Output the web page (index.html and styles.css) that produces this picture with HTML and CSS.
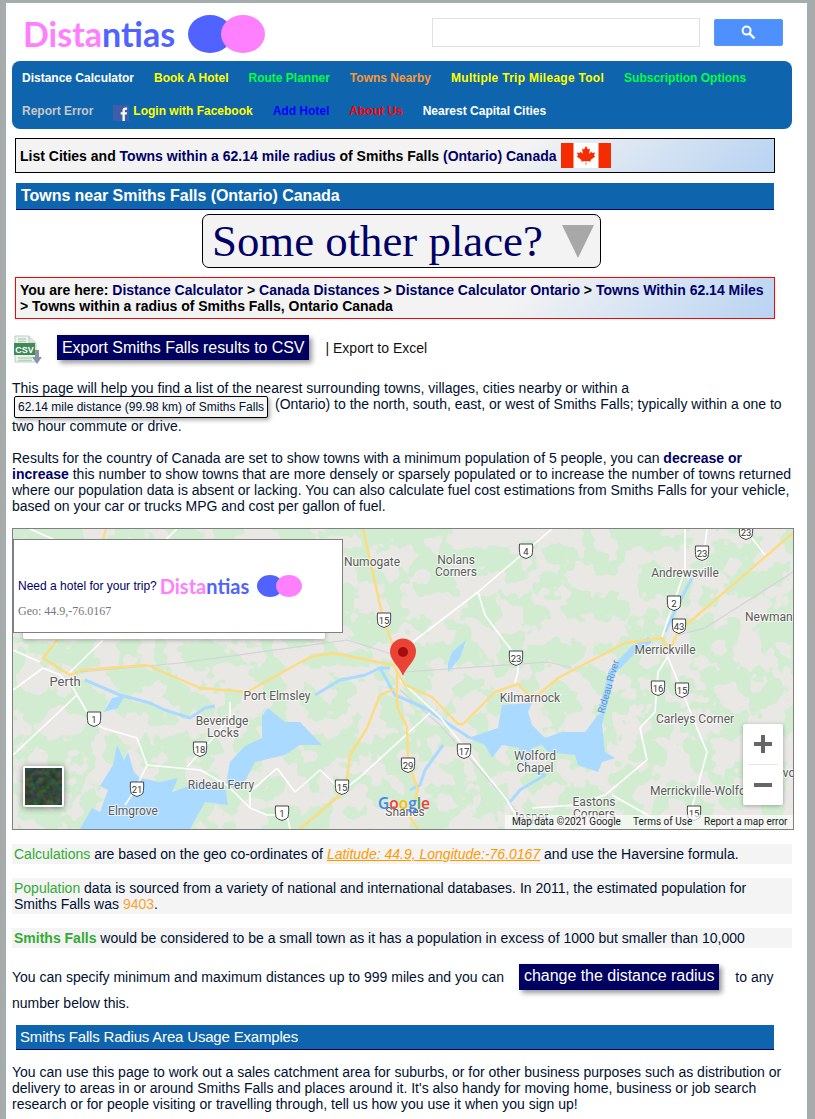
FILE: index.html
```html
<!DOCTYPE html>
<html lang="en">
<head>
<meta charset="utf-8">
<title>Towns near Smiths Falls (Ontario) Canada</title>
<link rel="stylesheet" href="styles.css">
</head>
<body>
<div class="page">
  <header class="top">
    <div class="logo logo-lg">
      <span class="logo-text"><span class="pink">Dista</span><span class="blue">ntias</span></span>
      <span class="dots"><i class="dot dot-blue"></i><i class="dot dot-pink"></i></span>
    </div>
    <form class="search">
      <input class="search-input" type="text" aria-label="Search">
      <button class="search-btn" type="button" aria-label="Search">
        <svg width="15" height="15" viewBox="0 0 15 15"><circle cx="5.6" cy="5.6" r="4" fill="none" stroke="#fff" stroke-width="2"/><path d="M8.6 8.6 13.4 13.4" stroke="#fff" stroke-width="2.4"/></svg>
      </button>
    </form>
  </header>

  <nav class="nav">
    <a class="c-white">Distance Calculator</a>
    <a class="c-yellow">Book A Hotel</a>
    <a class="c-green">Route Planner</a>
    <a class="c-orange">Towns Nearby</a>
    <a class="c-yellow wide">Multiple Trip Mileage Tool</a>
    <a class="c-green">Subscription Options</a>
    <a class="c-grey">Report Error</a>
    <a class="c-yellow fb-link">
      <svg class="fb" width="16" height="16" viewBox="0 0 16 16"><rect width="16" height="16" fill="#3f5ca8"/><path d="M9.5 16V9.6H7.7V7.2h1.8V5.600c0-2 1.200-3 3-3 .8 0 1.400.1 1.600.1v2.100h-1.100c-1 0-1.200.5-1.200 1.100v1.300h2.200l-.3 2.400h-1.900V16z" fill="#fff"/></svg>Login with Facebook</a>
    <a class="c-blue">Add Hotel</a>
    <a class="c-red">About Us</a>
    <a class="c-white">Nearest Capital Cities</a>
  </nav>

  <h1 class="panel panel-black title">
    <span>List Cities and <span class="navy">Towns within a 62.14 mile radius</span> of Smiths Falls <span class="navy">(Ontario) Canada</span></span>
    <svg class="flag" width="50" height="25" viewBox="0 0 50 25"><rect width="50" height="25" fill="#fff"/><rect width="12.5" height="25" fill="#f52c00"/><rect x="37.5" width="12.5" height="25" fill="#f52c00"/><path d="M25 3 23 6.5 21 5.5 22 11 19.5 8.5 19 10 16 9.5 17 12.5 15.8 13.5 20.5 17 20 18.5 24.7 18V22H25.3V18L30 18.5 29.5 17 34.2 13.5 33 12.5 34 9.5 31 10 30.5 8.5 28 11 29 5.5 27 6.5Z" fill="#f52c00"/></svg>
  </h1>

  <h2 class="bar bar-bold">Towns near Smiths Falls (Ontario) Canada</h2>

  <div class="place">
    <span>Some other place?</span>
    <svg width="32" height="33" viewBox="0 0 32 33"><path d="M0 0H32L16 33Z" fill="#a8a8a8"/></svg>
  </div>

  <div class="panel panel-red crumbs">
    You are here: <a class="navy">Distance Calculator</a> &gt; <a class="navy">Canada Distances</a> &gt; <a class="navy">Distance Calculator Ontario</a> &gt; <a class="navy">Towns Within 62.14 Miles</a> &gt; Towns within a radius of Smiths Falls, Ontario Canada
  </div>

  <div class="export">
    <svg class="csv" width="28" height="30" viewBox="0 0 28 30">
      <path d="M1 1H15L22 8V27H1Z" fill="#eef2ee" stroke="#c4cac6"/>
      <path d="M15 1V8H22" fill="#dfe5e0" stroke="#c4cac6"/>
      <path d="M4 4H12M4 6.500H12M4 23H18M4 25.500H18" stroke="#b5d6b5" stroke-width="1.500"/>
      <rect x="0" y="8" width="21" height="12" fill="#3f8a58"/>
      <text class="csv-text" x="10.500" y="17.500" text-anchor="middle">CSV</text>
      <path d="M21 15H25V22H28L23 29 18 22H21Z" fill="#8596a6"/>
    </svg>
    <a class="btn btn-export">Export Smiths Falls results to CSV</a>
    <span class="excel">| Export to Excel</span>
  </div>

  <p class="copy intro">This page will help you find a list of the nearest surrounding towns, villages, cities nearby or within a <span class="chip">62.14 mile distance (99.98 km) of Smiths Falls</span> (Ontario) to the north, south, east, or west of Smiths Falls; typically within a one to two hour commute or drive.</p>

  <p class="copy results">Results for the country of Canada are set to show towns with a minimum population of 5 people, you can <b>decrease or increase</b> this number to show towns that are more densely or sparsely populated or to increase the number of towns returned where our population data is absent or lacking. You can also calculate fuel cost estimations from Smiths Falls for your vehicle, based on your car or trucks MPG and cost per gallon of fuel.</p>

  <div class="map">
    <svg class="map-art" width="780" height="300" viewBox="13 529 780 300">
      <defs>
        <filter id="patches" x="0" y="0" width="100%" height="100%" color-interpolation-filters="sRGB">
          <feTurbulence type="fractalNoise" baseFrequency="0.042" numOctaves="3" seed="23"/>
          <feColorMatrix type="matrix" values="0 0 0 0 0.82  0 0 0 0 0.925  0 0 0 0 0.82  30 0 0 0 -14.400"/>
        </filter>
        <filter id="sat" x="0" y="0" width="100%" height="100%" color-interpolation-filters="sRGB">
          <feTurbulence type="fractalNoise" baseFrequency="0.16" numOctaves="2" seed="4"/>
          <feColorMatrix type="matrix" values="0.3 0 0 0 0.06  0 0.3 0 0 0.14  0 0 0.3 0 0.07  0 0 0 0 1"/>
        </filter>
        <path id="shield" d="M-6.500 -7H6.500C7 -3 6.500 1 6 4 5 6 2 6.500 0 7.500-2 6.500-5 6-6 4-6.500 1-7 -3-6.500 -7Z"/>
      </defs>
      <rect x="13" y="529" width="780" height="300" fill="#eae8e4"/>
      <rect x="13" y="529" width="780" height="300" filter="url(#patches)"/>

      <g class="rail">
        <path d="M80 672 180 663 347 640 405 658"/>
        <path d="M405 672 548 662 572 668"/>
        <path d="M678 635 705 628 793 572"/>
        <path d="M400 690 440 725 520 815"/>
      </g>

      <g class="water">
        <path d="M80 829 92 808 100 812 108 790 100 786 113 765 117 745 124 760 128 752 134 772 140 778 160 782 178 778 172 792 200 782 225 790 230 762 245 746 262 738 262 716 268 708 285 722 300 722 322 745 300 745 285 755 255 762 240 790 225 785 228 805 205 802 190 829Z"/>
        <path d="M468 738 498 728 502 705 532 703 528 712 532 725 545 738 562 732 585 732 598 715 605 712 602 725 605 752 615 758 602 762 598 772 578 765 575 755 548 752 542 745 532 748 535 755 520 748 502 745 492 758 485 745Z"/>
        <path d="M448 672 460 658 466 640 452 652 448 664Z"/>
        <path d="M112 698 125 695 118 708 104 712Z"/>
      </g>
      <g class="river">
        <path d="M602 712 612 672 635 648 650 640"/>
        <path class="thin" d="M85 680 120 695 150 703 165 710 190 718 205 708 215 706"/>
        <path class="thin" d="M315 695 340 680 365 675 380 668 390 668"/>
        <path class="thin" d="M380 668 395 695 425 708 450 725 470 738"/>
        <path class="thin" d="M443 745 425 770 420 785 410 790"/>
        <path class="thin" d="M665 632 678 605 692 578"/>
        <path class="thin" d="M520 748 530 770 545 775 520 790 510 802"/>
      </g>

      <g class="road-white">
        <path d="M405 648 478 592 552 529"/>
        <path d="M478 592 485 615 505 642 518 658 518 672 515 683"/>
        <path d="M400 680 440 717 507 800 517 817"/>
        <path d="M430 713 360 777 343 790"/>
        <path d="M13 755 77 695"/>
        <path d="M67 675 103 640"/>
        <path d="M13 650 40 662"/>
        <path d="M13 690 43 668 60 675 73 688 93 722 103 728 137 738 147 765 200 770 227 785 250 808 267 815 287 815 290 829"/>
        <path d="M147 765 135 790 125 805"/>
        <path d="M277 768 295 792 320 770 333 782 343 795"/>
        <path d="M277 768 250 792 250 808"/>
        <path d="M230 702 230 718 213 738 187 767"/>
        <path d="M667 655 707 752 692 808"/>
        <path d="M667 658 658 672 655 712 640 728 647 760 605 795 575 805 532 808"/>
        <path d="M612 795 660 822"/>
        <path d="M662 637 685 570 685 529"/>
        <path d="M752 538 765 555"/>
        <path d="M707 529 705 545"/>
        <path d="M177 529 160 545"/>
        <path d="M30 529 55 540"/>
      </g>

      <g class="road-yellow">
        <path d="M70 675 83 670 147 665 200 688 247 692 310 657 333 653 393 665 405 685 432 697 458 724 463 724 495 692 518 684 528 695 538 695 558 678 625 643 662 638 665 645 672 645 678 632 793 533"/>
        <path d="M363 529 383 618 400 665"/>
        <path d="M106 529 103 540"/>
        <path d="M57 640 43 658 70 675"/>
        <path d="M397 670 397 707 407 727 408 760 418 790 413 807 410 817 418 829"/>
        <path d="M397 688 380 695 367 728 350 755 347 778 340 795 300 829"/>
      </g>

      <g class="shields">
        <g transform="translate(384 620)"><use href="#shield"/><text y="3.5">15</text></g>
        <g transform="translate(94 719)"><use href="#shield"/><text y="3.5">1</text></g>
        <g transform="translate(200 749)"><use href="#shield"/><text y="3.5">18</text></g>
        <g transform="translate(137 789)"><use href="#shield"/><text y="3.5">21</text></g>
        <g transform="translate(342 787)"><use href="#shield"/><text y="3.5">15</text></g>
        <g transform="translate(282 813)"><use href="#shield"/><text y="3.5">1</text></g>
        <g transform="translate(408 765)"><use href="#shield"/><text y="3.5">29</text></g>
        <g transform="translate(464 751)"><use href="#shield"/><text y="3.5">17</text></g>
        <g transform="translate(516 658)"><use href="#shield"/><text y="3.5">23</text></g>
        <g transform="translate(526 551)"><use href="#shield"/><text y="3.5">4</text></g>
        <g transform="translate(702 553)"><use href="#shield"/><text y="3.5">23</text></g>
        <g transform="translate(746 532)"><use href="#shield"/><text y="3.5">23</text></g>
        <g transform="translate(674 603)"><use href="#shield"/><text y="3.5">2</text></g>
        <g transform="translate(679 626)"><use href="#shield"/><text y="3.5">43</text></g>
        <g transform="translate(658 688)"><use href="#shield"/><text y="3.5">16</text></g>
        <g transform="translate(682 690)"><use href="#shield"/><text y="3.5">15</text></g>
        <g transform="translate(694 813)"><use href="#shield"/><text y="3.5">15</text></g>
      </g>

      <g class="labels">
        <text x="372" y="566">Numogate</text>
        <text x="456" y="564">Nolans</text>
        <text x="456" y="576">Corners</text>
        <text x="685" y="577">Andrewsville</text>
        <text x="745" y="621" class="start">Newmanville</text>
        <text x="65" y="686" class="big">Perth</text>
        <text x="277" y="700">Port Elmsley</text>
        <text x="222" y="725">Beveridge</text>
        <text x="223" y="737">Locks</text>
        <text x="221" y="789">Rideau Ferry</text>
        <text x="133" y="815">Elmgrove</text>
        <text x="530" y="702">Kilmarnock</text>
        <text x="665" y="654">Merrickville</text>
        <text x="695" y="723">Carleys Corner</text>
        <text x="535" y="760">Wolford</text>
        <text x="535" y="772">Chapel</text>
        <text x="650" y="795" class="start">Merrickville-Wolford</text>
        <text x="594" y="806">Eastons</text>
        <text x="594" y="818">Corners</text>
        <text x="530" y="821">Jasper</text>
        <text x="405" y="816">Shanes</text>
        <text x="776" y="777" class="start">Evo</text>
      </g>
      <text class="river-name" transform="translate(604 714) rotate(-74)">Rideau River</text>

      <text class="google" x="378" y="809"><tspan fill="#4285f4">G</tspan><tspan fill="#ea4335">o</tspan><tspan fill="#fbbc05">o</tspan><tspan fill="#4285f4">g</tspan><tspan fill="#34a853">l</tspan><tspan fill="#ea4335">e</tspan></text>

      <path d="M403 676C400 667 390 661 390 651.500A13 13 0 0 1 416 651.500C416 661 406 667 403 676Z" fill="#ea4335"/>
      <circle cx="403" cy="652" r="5" fill="#a50e0e"/>

      <g class="thumb">
        <rect x="23" y="766" width="41" height="41" rx="2" fill="#fff"/>
        <rect x="25" y="768" width="37" height="37" filter="url(#sat)"/>
      </g>
    </svg>

    <div class="info-under"></div>
    <div class="info">
      <div class="info-line">
        <span class="info-need">Need a hotel for your trip?</span>
        <div class="logo logo-sm">
          <span class="logo-text"><span class="pink">Dista</span><span class="blue">ntias</span></span>
          <span class="dots"><i class="dot dot-blue"></i><i class="dot dot-pink"></i></span>
        </div>
      </div>
      <div class="geo">Geo: 44.9,-76.0167</div>
    </div>

    <div class="zoomer">
      <div class="zoom-key"><i class="zoom-h"></i><i class="zoom-v"></i></div>
      <hr class="zoom-sep">
      <div class="zoom-key"><i class="zoom-h"></i></div>
    </div>

    <div class="attrib">
      <span class="attrib-a">Map data ©2021 Google</span>
      <span class="attrib-b">Terms of Use</span>
      <span>Report a map error</span>
    </div>
  </div>

  <p class="copy note note-1"><span class="green">Calculations</span> are based on the geo co-ordinates of <a class="geo-link">Latitude: 44.9, Longitude:-76.0167</a> and use the Haversine formula.</p>
  <p class="copy note note-2"><span class="green">Population</span> data is sourced from a variety of national and international databases. In 2011, the estimated population for Smiths Falls was <span class="orange">9403</span>.</p>
  <p class="copy note note-2"><b class="green">Smiths Falls</b> would be considered to be a small town as it has a population in excess of 1000 but smaller than 10,000</p>

  <p class="copy radius">You can specify minimum and maximum distances up to 999 miles and you can <a class="btn btn-radius">change the distance radius</a> to any number below this.</p>

  <h2 class="bar bar-plain">Smiths Falls Radius Area Usage Examples</h2>

  <p class="copy usage">You can use this page to work out a sales catchment area for suburbs, or for other business purposes such as distribution or delivery to areas in or around Smiths Falls and places around it. It's also handy for moving home, business or job search research or for people visiting or travelling through, tell us how you use it when you sign up!</p>
</div>
</body>
</html>
```
FILE: styles.css
```css
* { box-sizing: border-box; }
html, body { margin: 0; padding: 0; height: 100%; overflow: hidden; }
body {
  background: #a9abab;
  font-family: "Liberation Sans", Arial, sans-serif;
  font-size: 14px;
  line-height: 16px;
  color: #001030;
}
.page {
  width: 803px;
  height: 1117px;
  margin: 2px 0 0 5px;
  padding: 0 15px 0 6px;
  background: #fff;
  border: 1px solid #94b5b5;
  border-bottom: 0;
  overflow: hidden;
}

/* header */
.top { height: 58px; display: flex; align-items: center; justify-content: space-between; padding-right: 9px; }
.logo { display: flex; align-items: center; }
.logo-text { font-family: Lato, sans-serif; font-weight: 700; }
.logo-lg { margin-left: 11px; margin-top: 3px; }
.logo-lg .logo-text { font-size: 34px; line-height: 40px; }
.logo-lg .dots { margin-left: 13px; }
.logo-lg .dot { width: 44px; height: 38px; }
.logo-lg .dot-pink { margin-left: -11px; }
.logo-sm { margin-left: 3px; }
.logo-sm .logo-text { font-size: 20px; line-height: 24px; }
.logo-sm .dots { margin-left: 8px; }
.logo-sm .dot { width: 26px; height: 22px; }
.logo-sm .dot-pink { margin-left: -7px; }
.dots { display: flex; }
.dot { display: block; border-radius: 50%; }
.dot-blue { background: #5062ff; }
.dot-pink { background: #ff80ff; }
.pink { color: #ff80ff; }
.blue { color: #5062ff; }
.search { display: flex; align-items: center; gap: 14px; margin-top: 1px; }
.search-input { width: 268px; height: 29px; border: 1px solid #dfe1e5; background: #fff; padding: 0; }
.search-btn { width: 69px; height: 27px; border: 1px solid #5a96fb; border-radius: 2px; background: #4d90fe; padding: 0; display: flex; align-items: center; justify-content: center; }

/* nav */
.nav {
  height: 68px;
  padding: 1px 10px 0;
  background: #0f65ad;
  border-radius: 8px;
  display: flex;
  flex-wrap: wrap;
  align-content: flex-start;
  column-gap: 20px;
  font-size: 12px;
  font-weight: 700;
  line-height: 33px;
}
.wide { letter-spacing: 0.28px; }
.fb-link { display: inline-flex; align-items: center; }
.fb { margin-right: 4px; margin-top: 3px; }
.c-white { color: #fff; }
.c-yellow { color: #ff0; }
.c-green { color: #00ff40; }
.c-orange { color: #f6993a; }
.c-grey { color: #c8c8c8; }
.c-blue { color: #00f; }
.c-red { color: #f00; }

/* panels */
.panel {
  width: 760px;
  margin-left: 3px;
  padding: 0 4px;
  font-size: 14px;
  font-weight: 700;
  color: #000;
  background: linear-gradient(135deg, #f3f3f3 0%, #f3f3f3 65%, #b8d3f2 100%);
}
.navy { color: #000066; }
.panel-black { border: 1px solid #000; }
.panel-red { border: 1px solid #f00; }
.title { display: flex; align-items: center; height: 35px; margin-top: 9px; margin-bottom: 0; line-height: 16px; }
.flag { margin-left: 4px; flex: none; }
.crumbs { height: 42px; margin-top: 9px; padding-top: 4px; line-height: 16px; }

.bar {
  width: 758px;
  margin: 0 0 0 4px;
  padding-left: 5px;
  background: #0f65ad;
  color: #fff;
  border-bottom: 1px solid #000066;
}
.bar-bold { height: 27px; margin-top: 10px; font-size: 16px; font-weight: 700; line-height: 26px; letter-spacing: -0.05px; }
.bar-plain { height: 25px; margin-top: 9px; padding-left: 4px; font-size: 15px; font-weight: 400; line-height: 24px; letter-spacing: -0.18px; }

.place {
  width: 399px;
  height: 54px;
  margin: 4px 0 0 190px;
  padding-left: 9px;
  display: flex;
  align-items: center;
  gap: 19px;
  background: #f3f3f3;
  border: 1px solid #000;
  border-radius: 7px;
  font-family: "Liberation Serif", "Times New Roman", serif;
  font-size: 44.800px;
  line-height: 54px;
  color: #000066;
}

/* export */
.export { display: flex; align-items: flex-start; margin-top: 16px; margin-left: 2px; height: 29px; }
.csv { flex: none; }
.csv-text { font-family: "Liberation Sans", sans-serif; font-size: 9px; font-weight: 700; fill: #fff; }
.btn { background: #000060; color: #fff; font-size: 16px; box-shadow: 3px 3px 5px #999; }
.btn-export { margin-left: 15px; padding: 0 5px; height: 25px; line-height: 25px; letter-spacing: -0.06px; }
.excel { margin-left: 16px; margin-top: 5px; color: #111; }

/* copy */
.copy { margin: 0; }
.intro { margin-top: 16px; }
.chip {
  display: inline-block;
  height: 22px;
  margin-left: 2px;
  margin-right: 3px;
  padding: 0 3px;
  border: 1px solid #000;
  border-radius: 2px;
  background: #f7f7f7;
  box-shadow: 2px 2px 4px #aaa;
  font-size: 12px;
  line-height: 20px;
  vertical-align: top;
}
.results { margin-top: 16px; }
.results b { color: #000066; }

/* map */
.map {
  position: relative;
  width: 782px;
  height: 302px;
  margin-top: 14px;
  border: 1px solid #808080;
  overflow: hidden;
}
.map-art { display: block; }
.rail path { fill: none; stroke: #d3d3d8; stroke-width: 1.2; }
.water path { fill: #aadaff; }
.river path { fill: none; stroke: #aadaff; stroke-width: 7; stroke-linejoin: round; }
.river path.thin { stroke-width: 3; }
.road-white path { fill: none; stroke: #fff; stroke-width: 1.6; stroke-linejoin: round; }
.road-yellow path { fill: none; stroke: #fddb80; stroke-width: 2.400; stroke-linejoin: round; }
.shields use { fill: #fff; stroke: #444; stroke-width: 1; }
.shields text { font-family: Roboto, sans-serif; font-size: 9.500px; fill: #333; text-anchor: middle; }
.labels text {
  font-family: Roboto, sans-serif;
  font-size: 12px;
  fill: #5b5b5b;
  text-anchor: middle;
  stroke: #fff;
  stroke-width: 2px;
  stroke-opacity: 0.7;
  paint-order: stroke;
}
.labels text.start { text-anchor: start; }
.labels text.big { font-size: 13px; }
.river-name { font-family: Roboto, sans-serif; font-size: 10px; fill: #5e94c8; }
.google { font-family: "Open Sans", sans-serif; font-size: 15.500px; font-weight: 600; }
.thumb { filter: drop-shadow(0 1px 3px rgba(0,0,0,.45)); }

.info-under {
  position: absolute;
  left: 10px;
  top: 20px;
  width: 302px;
  height: 90px;
  background: #fff;
  border-radius: 2px;
  box-shadow: 0 1px 4px rgba(0,0,0,.3);
}
.info {
  position: absolute;
  left: 0;
  top: 10px;
  width: 330px;
  height: 94px;
  padding: 34px 0 0 4px;
  background: #fff;
  border: 1px solid #808080;
}
.info-line { display: flex; align-items: center; height: 24px; }
.info-need { font-size: 12px; color: #000066; }
.geo { margin-top: 5px; font-family: "Liberation Serif", serif; font-size: 12px; color: #777; }

.zoomer {
  position: absolute;
  right: 10px;
  top: 195px;
  width: 40px;
  height: 81px;
  background: #fff;
  border-radius: 2px;
  box-shadow: 0 1px 4px rgba(0,0,0,.3);
}
.zoom-key { position: relative; height: 40px; }
.zoom-h, .zoom-v { position: absolute; background: #666; }
.zoom-h { left: 11px; top: 18px; width: 18px; height: 4px; }
.zoom-v { left: 18px; top: 11px; width: 4px; height: 18px; }
.zoom-sep { margin: 0 5px; height: 1px; border: 0; background: #e6e6e6; }

.attrib {
  position: absolute;
  right: 0;
  bottom: 0;
  width: 288px;
  height: 14px;
  padding-left: 7px;
  display: flex;
  background: rgba(255,255,255,.65);
  font-family: Roboto, sans-serif;
  font-size: 10px;
  line-height: 14px;
  color: #222;
  white-space: nowrap;
}
.attrib-a { width: 121px; }
.attrib-b { width: 71px; }

/* notes */
.note { background: #f4f4f4; padding: 2px 2px; }
.note-1 { margin-top: 14px; }
.note-2 { margin-top: 14px; }
.green { color: #33aa33; }
.orange { color: #f9a232; }
.geo-link { color: #f90; font-style: italic; text-decoration: underline; }

.radius { margin-top: 16px; line-height: 26px; }
.btn-radius {
  display: inline-block;
  height: 26px;
  margin: 0 12px 0 11px;
  padding: 0 5px;
  line-height: 24px;
  letter-spacing: -0.03px;
  vertical-align: top;
}
.usage { margin-top: 14px; }
```
